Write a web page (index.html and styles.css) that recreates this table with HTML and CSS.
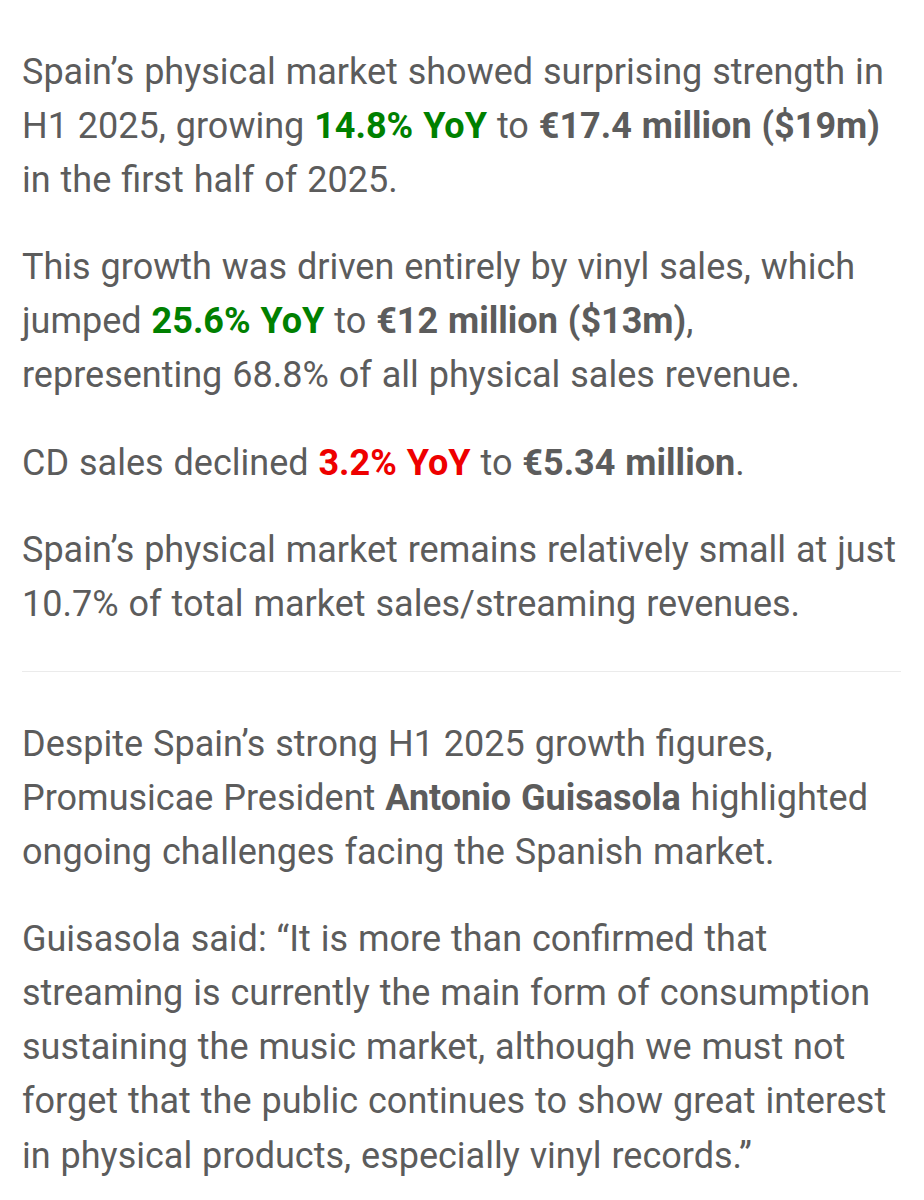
FILE: index.html
```html
<!DOCTYPE html>
<html lang="en">
<head>
<meta charset="utf-8">
<title>Spain physical market</title>
<link rel="stylesheet" href="styles.css">
</head>
<body>
<article class="article">
  <p>Spain’s physical market showed surprising strength in H1 2025, growing <strong class="up">14.8% YoY</strong> to <strong>€17.4 million ($19m)</strong> in the first half of 2025.</p>
  <p>This growth was driven entirely by vinyl sales, which jumped <strong class="up">25.6% YoY</strong> to <strong>€12 million ($13m)</strong>, representing 68.8% of all physical sales revenue.</p>
  <p>CD sales declined <strong class="down">3.2% YoY</strong> to <strong>€5.34 million</strong>.</p>
  <p>Spain’s physical market remains relatively small at just 10.7% of total market sales/streaming revenues.</p>
  <hr class="divider">
  <p>Despite Spain’s strong H1 2025 growth figures, Promusicae President <strong>Antonio Guisasola</strong> highlighted ongoing challenges facing the Spanish market.</p>
  <p>Guisasola said: “It is more than confirmed that streaming is currently the main form of consumption sustaining the music market, although we must not forget that the public continues to show great interest in physical products, especially vinyl records.”</p>
</article>
</body>
</html>
```

FILE: styles.css
```css
html, body {
  margin: 0;
  padding: 0;
  background: #ffffff;
}

.article {
  padding: 45px 23px 0 22px;
  font-family: Roboto, "Liberation Sans", Arial, sans-serif;
  font-size: 36px;
  line-height: 54.1px;
  word-spacing: 1px;
  color: #5c5c5c;
}

.article p {
  margin: 0 0 33px 0;
}

.article strong {
  font-weight: 700;
}

.article .up {
  color: #008000;
}

.article .down {
  color: #ee0000;
}

.divider {
  border: 0;
  height: 1px;
  background: #ebebeb;
  margin: 40px 0 45px 0;
}
```
